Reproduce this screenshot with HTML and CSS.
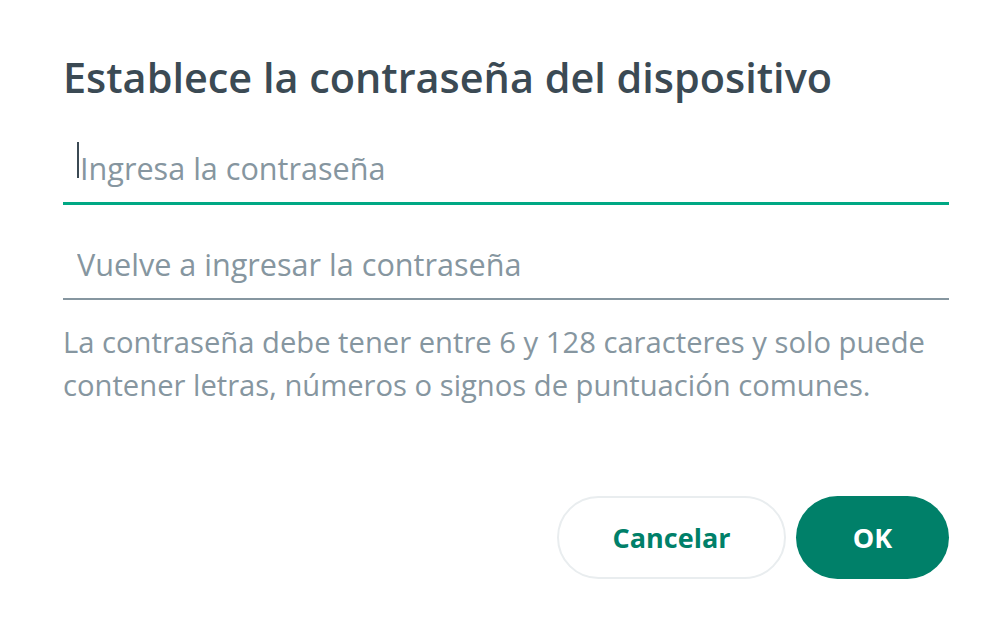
FILE: index.html
```html
<!DOCTYPE html>
<html lang="es">
<head>
  <meta charset="UTF-8" />
  <title>Establece la contraseña del dispositivo</title>
  <link rel="stylesheet" href="styles.css">
</head>
<body>

  <div class="dialog">
    <h1 class="title">Establece la contraseña del dispositivo</h1>

    <!-- Campos -->
    <div class="field focused">
      <span class="caret"></span>
      <input type="password" placeholder="Ingresa la contraseña" />
    </div>
    <div class="field">
      <input type="password" placeholder="Vuelve a ingresar la contraseña" />
    </div>

    <p class="hint">La contraseña debe tener entre 6 y 128 caracteres y solo puede contener letras, números o signos de puntuación comunes.</p>

    <div class="actions">
      <button class="btn btn-cancel">Cancelar</button>
      <button class="btn btn-ok">OK</button>
    </div>
  </div>

</body>
</html>
```

FILE: styles.css
```css
* {
  box-sizing: border-box;
  margin: 0;
  padding: 0;
}

html, body {
  height: 100%;
  background-color: #fff;
  font-family: "Open Sans", "Noto Sans", sans-serif;
}

.dialog {
  padding: 52px 56px 0 63px;
}

.title {
  font-size: 41.4px;
  font-weight: 600;
  line-height: 50px;
  color: #3b4a54;
  white-space: nowrap;
}

.field {
  display: flex;
  align-items: center;
  height: 95px;
  padding-top: 25px;
  border-bottom: 2px solid #8696a0;
}

.field.focused {
  height: 103px;
  padding-top: 32px;
  border-bottom: 3px solid #00a884;
}

.caret {
  width: 2px;
  height: 36px;
  margin: 0 1px 16px 14px;
  background-color: #3b4a54;
}

.field input {
  flex: 1;
  border: none;
  outline: none;
  background: none;
  font-family: inherit;
  font-size: 30.6px;
  color: #3b4a54;
  padding-left: 14px;
}

.field.focused input {
  padding-left: 0;
}

.field input::placeholder {
  color: #8696a0;
}

.hint {
  margin-top: 21px;
  font-size: 29.2px;
  line-height: 43px;
  color: #8696a0;
}

.actions {
  display: flex;
  justify-content: flex-end;
  gap: 10px;
  margin-top: 89px;
}

.btn {
  height: 83px;
  border-radius: 42px;
  font-family: inherit;
  font-size: 27px;
  font-weight: 700;
  cursor: pointer;
}

.btn-cancel {
  width: 229px;
  background: #fff;
  border: 2px solid #e9edef;
  color: #008069;
}

.btn-ok {
  width: 153px;
  background: #008069;
  border: none;
  color: #fff;
}
```
